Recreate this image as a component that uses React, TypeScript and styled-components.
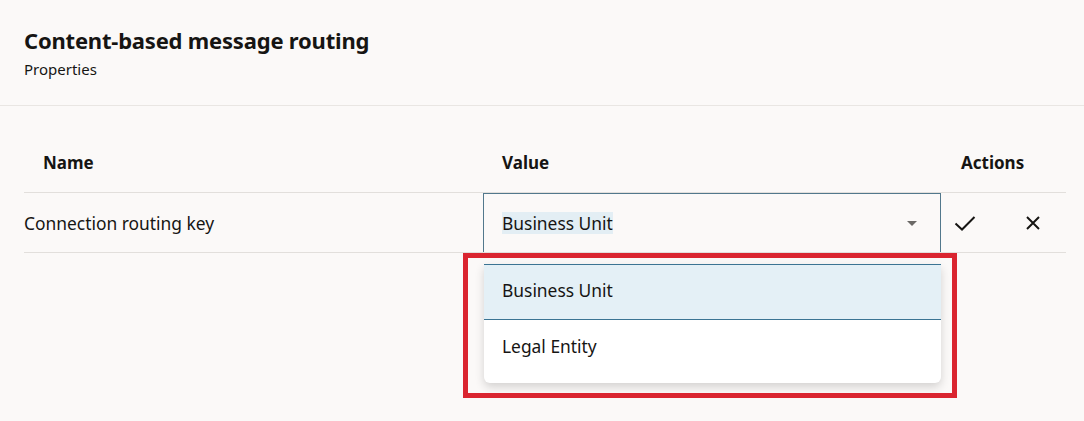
import styled, { createGlobalStyle } from 'styled-components'

const GlobalStyle = createGlobalStyle`
  html, body {
    margin: 0;
    padding: 0;
    background: #fbf9f8;
  }
  body {
    font-family: 'Noto Sans', 'Open Sans', sans-serif;
    color: #161513;
  }
`

const Page = styled.div`
  width: 1084px;
  height: 421px;
  overflow: hidden;
  background: #fbf9f8;
`

const Header = styled.header`
  height: 106px;
  padding: 25px 24px 0;
  box-sizing: border-box;
  border-bottom: 1px solid #e9e6e3;
`

const Title = styled.h1`
  margin: 0;
  font-size: 22px;
  font-weight: 700;
  line-height: 30px;
  letter-spacing: -0.2px;
`

const Subtitle = styled.div`
  margin-top: 4px;
  font-size: 15px;
  line-height: 20px;
`

const Content = styled.div`
  padding: 26px 18px 0 24px;
`

const Table = styled.div`
  display: grid;
  grid-template-columns: 459px 458px 125px;
`

const HeadCell = styled.div<{ $pad: number }>`
  height: 60px;
  display: flex;
  align-items: center;
  padding-left: ${p => p.$pad}px;
  font-size: 17px;
  font-weight: 700;
  border-bottom: 1px solid #e2dfdc;
`

const Cell = styled.div`
  height: 59px;
  display: flex;
  align-items: center;
  font-size: 17.4px;
  border-bottom: 1px solid #e2dfdc;
  position: relative;
`

const Select = styled.div`
  flex: 1;
  align-self: stretch;
  display: flex;
  align-items: center;
  justify-content: space-between;
  padding: 0 23px 1px 18px;
  border: 1px solid #52788c;
  border-bottom: none;
  background: #fbf9f8;
`

const Highlight = styled.span`
  background: #e3eef4;
  line-height: 22px;
`

const Caret = styled.span`
  width: 0;
  height: 0;
  border-left: 5px solid transparent;
  border-right: 5px solid transparent;
  border-top: 5px solid #6b6966;
  margin-top: 1px;
`

const Actions = styled.div`
  display: flex;
  align-items: center;
  gap: 44px;
  padding-left: 12px;
`

const IconButton = styled.button`
  border: none;
  background: none;
  padding: 0;
  width: 24px;
  height: 24px;
  display: flex;
  align-items: center;
  justify-content: center;
  color: #161513;
`

const Dropdown = styled.div`
  position: absolute;
  top: 71px;
  left: 1px;
  right: 0;
  background: #fff;
  border-top: 1px solid #3b7493;
  border-radius: 0 0 6px 6px;
  box-shadow: 0 4px 10px rgba(0, 0, 0, 0.16);
  padding-bottom: 8px;
  z-index: 2;
`

const Option = styled.div<{ $active?: boolean }>`
  height: 55px;
  box-sizing: border-box;
  display: flex;
  align-items: center;
  padding: 0 0 4px 18px;
  font-size: 17.4px;
  background: ${p => (p.$active ? '#e4f0f6' : '#fff')};
  border-bottom: ${p => (p.$active ? '1px solid #3b7493' : 'none')};
`

const Callout = styled.div`
  position: absolute;
  top: 60px;
  left: -20px;
  width: 494px;
  height: 145px;
  box-sizing: border-box;
  border: 5px solid #da2530;
  z-index: 3;
  pointer-events: none;
`

const Check = () => (
  <svg width="24" height="24" viewBox="0 0 24 24" fill="none" stroke="currentColor" strokeWidth="2">
    <path d="M2.5 12.5l6.5 6L21.5 6" />
  </svg>
)

const Close = () => (
  <svg width="18" height="18" viewBox="0 0 24 24" fill="none" stroke="currentColor" strokeWidth="2.6">
    <path d="M4 4l16 16M20 4L4 20" />
  </svg>
)

export default function App() {
  return (
    <Page>
      <GlobalStyle />
      <Header>
        <Title>Content-based message routing</Title>
        <Subtitle>Properties</Subtitle>
      </Header>
      <Content>
        <Table>
          <HeadCell $pad={19}>Name</HeadCell>
          <HeadCell $pad={19}>Value</HeadCell>
          <HeadCell $pad={20}>Actions</HeadCell>
          <Cell>Connection routing key</Cell>
          <Cell>
            <Select>
              <Highlight>Business Unit</Highlight>
              <Caret />
            </Select>
            <Dropdown>
              <Option $active>Business Unit</Option>
              <Option>Legal Entity</Option>
            </Dropdown>
            <Callout />
          </Cell>
          <Cell>
            <Actions>
              <IconButton aria-label="Save"><Check /></IconButton>
              <IconButton aria-label="Cancel"><Close /></IconButton>
            </Actions>
          </Cell>
        </Table>
      </Content>
    </Page>
  )
}
